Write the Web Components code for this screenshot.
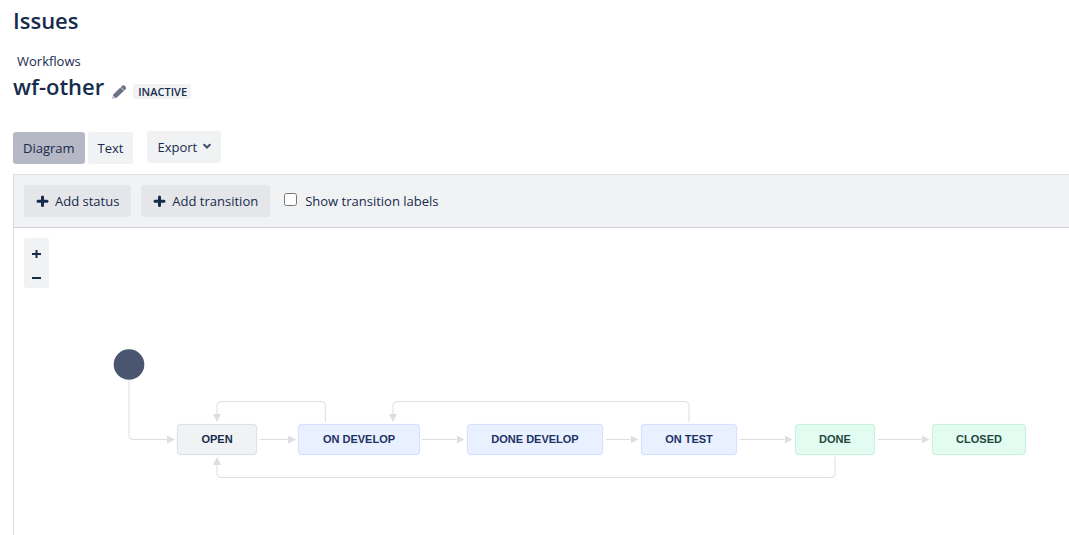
<!DOCTYPE html>
<html lang="en">
<head>
<meta charset="utf-8">
<title>Issues - wf-other</title>
<style>
  html, body { margin: 0; height: 100%; }
  body {
    font: 13px/20px "Segoe UI", "Open Sans", "Noto Sans", sans-serif;
    color: #172b4d;
    background: #fff;
    overflow: hidden;
  }
</style>
</head>
<body>
<workflow-page></workflow-page>

<script>
const define = (name, html, setup) => {
  const template = document.createElement('template');
  template.innerHTML = html;
  customElements.define(name, class extends HTMLElement {
    constructor() {
      super();
      this.attachShadow({ mode: 'open' }).append(template.content.cloneNode(true));
    }
    connectedCallback() { if (setup) setup(this, this.shadowRoot); }
  });
};

define('status-lozenge', `
  <style>
    :host {
      display: block; padding: 0 4px 0 5px; border-radius: 3px;
      background: #f1f2f4; font-size: 11px; line-height: 15px; font-weight: 600;
    }
  </style>
  <slot></slot>`);

define('ui-button', `
  <style>
    :host { display: block; }
    button {
      display: flex; align-items: center; gap: 6px; height: 32px; padding: 0 10px;
      border: 0; border-radius: 3px; background: #f1f2f4; color: #172b4d;
      font: inherit; white-space: nowrap;
    }
    :host([pressed]) button { background: #b6b8c5; }
    :host([tone="toolbar"]) button { background: #e4e6ea; padding: 0 12px; }
    svg { display: none; }
    :host([icon="plus"]) .plus, :host([icon="chevron"]) .chevron { display: block; }
  </style>
  <button type="button">
    <svg class="plus" width="13" height="12" viewBox="0 0 13 12" aria-hidden="true"><path d="M6.5 2V10.5M2 6.2H11" stroke="#172b4d" stroke-width="3" stroke-linecap="round"/></svg>
    <slot></slot>
    <svg class="chevron" width="8" height="8" viewBox="0 0 8 8" aria-hidden="true"><path d="M1.2 1.7L4 4.5L6.8 1.7" fill="none" stroke="#42526e" stroke-width="2" stroke-linecap="round"/></svg>
  </button>`);

define('workflow-header', `
  <style>
    :host { display: block; padding: 5px 13px 0; }
    h1, h2 { margin: 0; font-size: 22px; line-height: 30px; font-weight: 600; }
    nav { display: flex; padding: 16px 4px 0; }
    a { color: inherit; text-decoration: none; }
    .title { display: flex; align-items: center; gap: 8px; }
    .edit { border: 0; padding: 0; margin: 12px 0 0; background: none; line-height: 0; }
    status-lozenge { margin: 10px 0 0 -2px; }
  </style>
  <h1>Issues</h1>
  <nav aria-label="Breadcrumb"><a href="#workflows">Workflows</a></nav>
  <div class="title">
    <h2>wf-other</h2>
    <button class="edit" type="button" aria-label="Edit name">
      <svg width="15" height="14" viewBox="0 0 15 14"><path d="M0.4 13.5L1.2 9.6L8.4 2.4L12 5.8L4.7 12.8Z M8.8 2L10.6 .4Q12 -.1 13.3 1.2Q14.4 2.5 13.9 3.7L12.4 5.4Z" fill="#6b7389"/><path d="M1.2 10.5L3.6 12.8L.8 13.2Z" fill="#c1c7d0"/></svg>
    </button>
    <status-lozenge>INACTIVE</status-lozenge>
  </div>`);

define('view-switcher', `
  <style>
    :host { display: flex; gap: 14px; padding: 30px 13px 10px; }
    .views { display: flex; gap: 3px; padding-top: 1px; }
  </style>
  <div class="views">
    <ui-button pressed>Diagram</ui-button>
    <ui-button>Text</ui-button>
  </div>
  <ui-button icon="chevron">Export</ui-button>`);

define('designer-toolbar', `
  <style>
    :host {
      display: flex; align-items: center; gap: 10px; padding: 10px;
      background: #f1f2f4; border-top: 1px solid #dcdee4; border-bottom: 1px solid #d0d2da;
    }
    label { display: flex; align-items: center; gap: 8px; padding-left: 4px; }
    input { width: 13px; height: 13px; margin: 0 0 3px; }
  </style>
  <ui-button tone="toolbar" icon="plus">Add status</ui-button>
  <ui-button tone="toolbar" icon="plus">Add transition</ui-button>
  <label for="labels"><input type="checkbox" id="labels">Show transition labels</label>`);

define('zoom-controls', `
  <style>
    :host { display: flex; flex-direction: column; width: 25px; padding: 1px 0; border-radius: 3px; background: #f1f2f4; }
    button { display: grid; place-items: center; height: 24px; padding: 6px 0 0; border: 0; background: none; }
    svg { display: block; }
  </style>
  <button type="button" aria-label="Zoom in"><svg width="9" height="9" viewBox="0 0 9 9"><path d="M4.5 0V8M0 4H9" stroke="#172b4d" stroke-width="2"/></svg></button>
  <button type="button" aria-label="Zoom out"><svg width="9" height="9" viewBox="0 0 9 9"><path d="M0 4H9" stroke="#172b4d" stroke-width="2"/></svg></button>`);

define('workflow-node', `
  <style>
    :host {
      position: absolute; display: flex; align-items: center; justify-content: center;
      box-sizing: border-box; height: 31px; padding-bottom: 2px; border: 1px solid #e0e1e7; border-radius: 4px;
      box-shadow: 0 0 1px #e0e1e7; background: #f1f2f4; color: #172b4d;
      font: 700 11px/14px "Liberation Sans", Arial, sans-serif; white-space: nowrap;
    }
    :host([kind="progress"]) { background: #e9f0ff; border-color: #d5e1ff; box-shadow: 0 0 1px #d5e1ff; color: #1d3264; }
    :host([kind="done"]) { background: #e3fcf2; border-color: #c9f2e0; box-shadow: 0 0 1px #c9f2e0; color: #21483f; }
  </style>
  <slot></slot>`, host => {
    host.style.left = host.getAttribute('x') + 'px';
    host.style.top = host.getAttribute('y') + 'px';
    host.style.width = host.getAttribute('w') + 'px';
  });

define('workflow-diagram', `
  <style>
    :host { display: block; position: relative; flex: 1; overflow: hidden; }
    zoom-controls { margin: 10px; }
    .edges { position: absolute; left: 0; top: 0; }
  </style>
  <zoom-controls></zoom-controls>
  <svg class="edges" width="1055" height="307" viewBox="0 0 1055 307" aria-hidden="true">
    <defs>
      <marker id="arrow" viewBox="0 0 8 8" markerWidth="8" markerHeight="8" refX="0" refY="4" markerUnits="userSpaceOnUse" orient="auto"><path d="M0 0L8 4L0 8Z" fill="#dddee4"/></marker>
    </defs>
    <circle cx="115" cy="136.5" r="15.3" fill="#4a556f"/>
    <g fill="none" stroke="#dddee4">
      <path marker-end="url(#arrow)" d="M115 152V207.5Q115 211.5 119 211.5H153"/>
      <path marker-end="url(#arrow)" d="M246 211.5H274"/>
      <path marker-end="url(#arrow)" d="M408 211.5H442.5"/>
      <path marker-end="url(#arrow)" d="M592 211.5H616.5"/>
      <path marker-end="url(#arrow)" d="M726 211.5H770.5"/>
      <path marker-end="url(#arrow)" d="M864 211.5H907.5"/>
      <path marker-end="url(#arrow)" d="M311.3 194V177.5Q311.3 173.5 307.3 173.5H207Q203 173.5 203 177.5V186"/>
      <path marker-end="url(#arrow)" d="M675 194V177.5Q675 173.5 671 173.5H383Q379 173.5 379 177.5V186"/>
      <path marker-end="url(#arrow)" d="M821 229V245.5Q821 249.5 817 249.5H207Q203 249.5 203 245.5V237"/>
    </g>
  </svg>
  <workflow-node x="163" y="196" w="80">OPEN</workflow-node>
  <workflow-node x="284" y="196" w="122" kind="progress">ON DEVELOP</workflow-node>
  <workflow-node x="453" y="196" w="136" kind="progress">DONE DEVELOP</workflow-node>
  <workflow-node x="627" y="196" w="96" kind="progress">ON TEST</workflow-node>
  <workflow-node x="781" y="196" w="80" kind="done">DONE</workflow-node>
  <workflow-node x="918" y="196" w="94" kind="done">CLOSED</workflow-node>`);

define('workflow-page', `
  <style>
    :host { display: flex; flex-direction: column; min-height: 100vh; }
    main { display: flex; flex-direction: column; flex: 1; margin-left: 13px; border-left: 1px solid #dcdee4; }
  </style>
  <workflow-header></workflow-header>
  <view-switcher></view-switcher>
  <main>
    <designer-toolbar></designer-toolbar>
    <workflow-diagram></workflow-diagram>
  </main>`);
</script>
</body>
</html>
